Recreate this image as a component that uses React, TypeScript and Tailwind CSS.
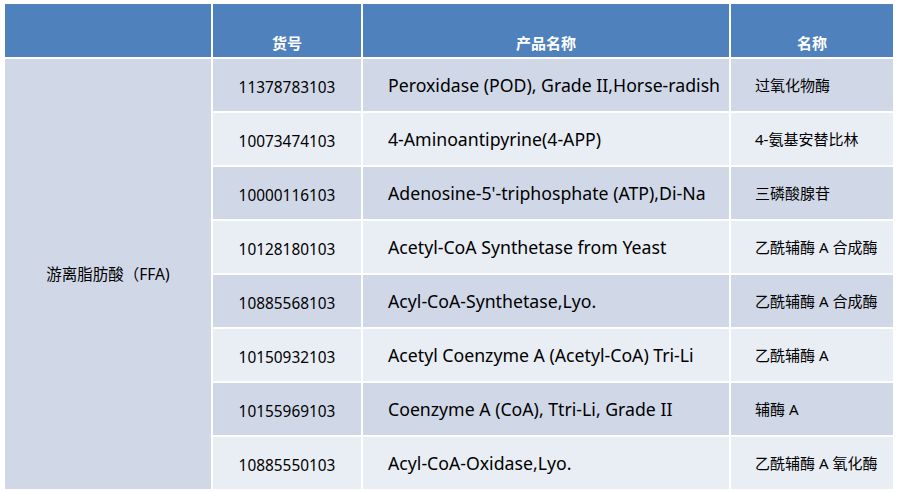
const rows: [string, string, string][] = [
  ["11378783103", "Peroxidase (POD), Grade II,Horse-radish", "过氧化物酶"],
  ["10073474103", "4-Aminoantipyrine(4-APP)", "4-氨基安替比林"],
  ["10000116103", "Adenosine-5'-triphosphate (ATP),Di-Na", "三磷酸腺苷"],
  ["10128180103", "Acetyl-CoA Synthetase from Yeast", "乙酰辅酶 A 合成酶"],
  ["10885568103", "Acyl-CoA-Synthetase,Lyo.", "乙酰辅酶 A 合成酶"],
  ["10150932103", "Acetyl Coenzyme A (Acetyl-CoA) Tri-Li", "乙酰辅酶 A"],
  ["10155969103", "Coenzyme A (CoA), Ttri-Li, Grade II", "辅酶 A"],
  ["10885550103", "Acyl-CoA-Oxidase,Lyo.", "乙酰辅酶 A 氧化酶"],
];

const font = { fontFamily: '"Noto Sans", "Noto Sans CJK SC", sans-serif' };

export default function App() {
  return (
    <div className="w-[898px] h-[492px] bg-white pl-[5px] pt-[4px] text-black" style={font}>
      <div className="grid grid-cols-[206px_148px_366px_162px] grid-rows-[53px_repeat(8,52px)] gap-x-[2px] gap-y-[2px]">
        {/* Header */}
        <div className="bg-[#4f81bd]" />
        <div className="bg-[#4f81bd] flex items-end justify-center pb-[3px] text-white text-[15px] font-bold">
          货号
        </div>
        <div className="bg-[#4f81bd] flex items-end justify-center pb-[3px] text-white text-[15px] font-bold">
          产品名称
        </div>
        <div className="bg-[#4f81bd] flex items-end justify-center pb-[3px] text-white text-[15px] font-bold">
          名称
        </div>

        {/* Merged first column */}
        <div className="row-span-8 bg-[#d0d8e8] flex items-center justify-center pt-[2px] text-[15.5px]">
          游离脂肪酸（FFA)
        </div>

        {rows.map(([code, product, name], i) => {
          const bg = i % 2 === 0 ? "bg-[#d0d8e8]" : "bg-[#e9edf4]";
          return [
            <div key={`c${i}`} className={`${bg} flex items-center justify-center pt-[5px] text-[15.4px]`}>
              {code}
            </div>,
            <div key={`p${i}`} className={`${bg} flex items-center pl-[25px] pt-[1px] text-[17.7px] whitespace-nowrap`}>
              {product}
            </div>,
            <div key={`n${i}`} className={`${bg} flex items-center pl-[24px] text-[15px] whitespace-nowrap`}>
              {name}
            </div>,
          ];
        })}
      </div>
    </div>
  );
}
